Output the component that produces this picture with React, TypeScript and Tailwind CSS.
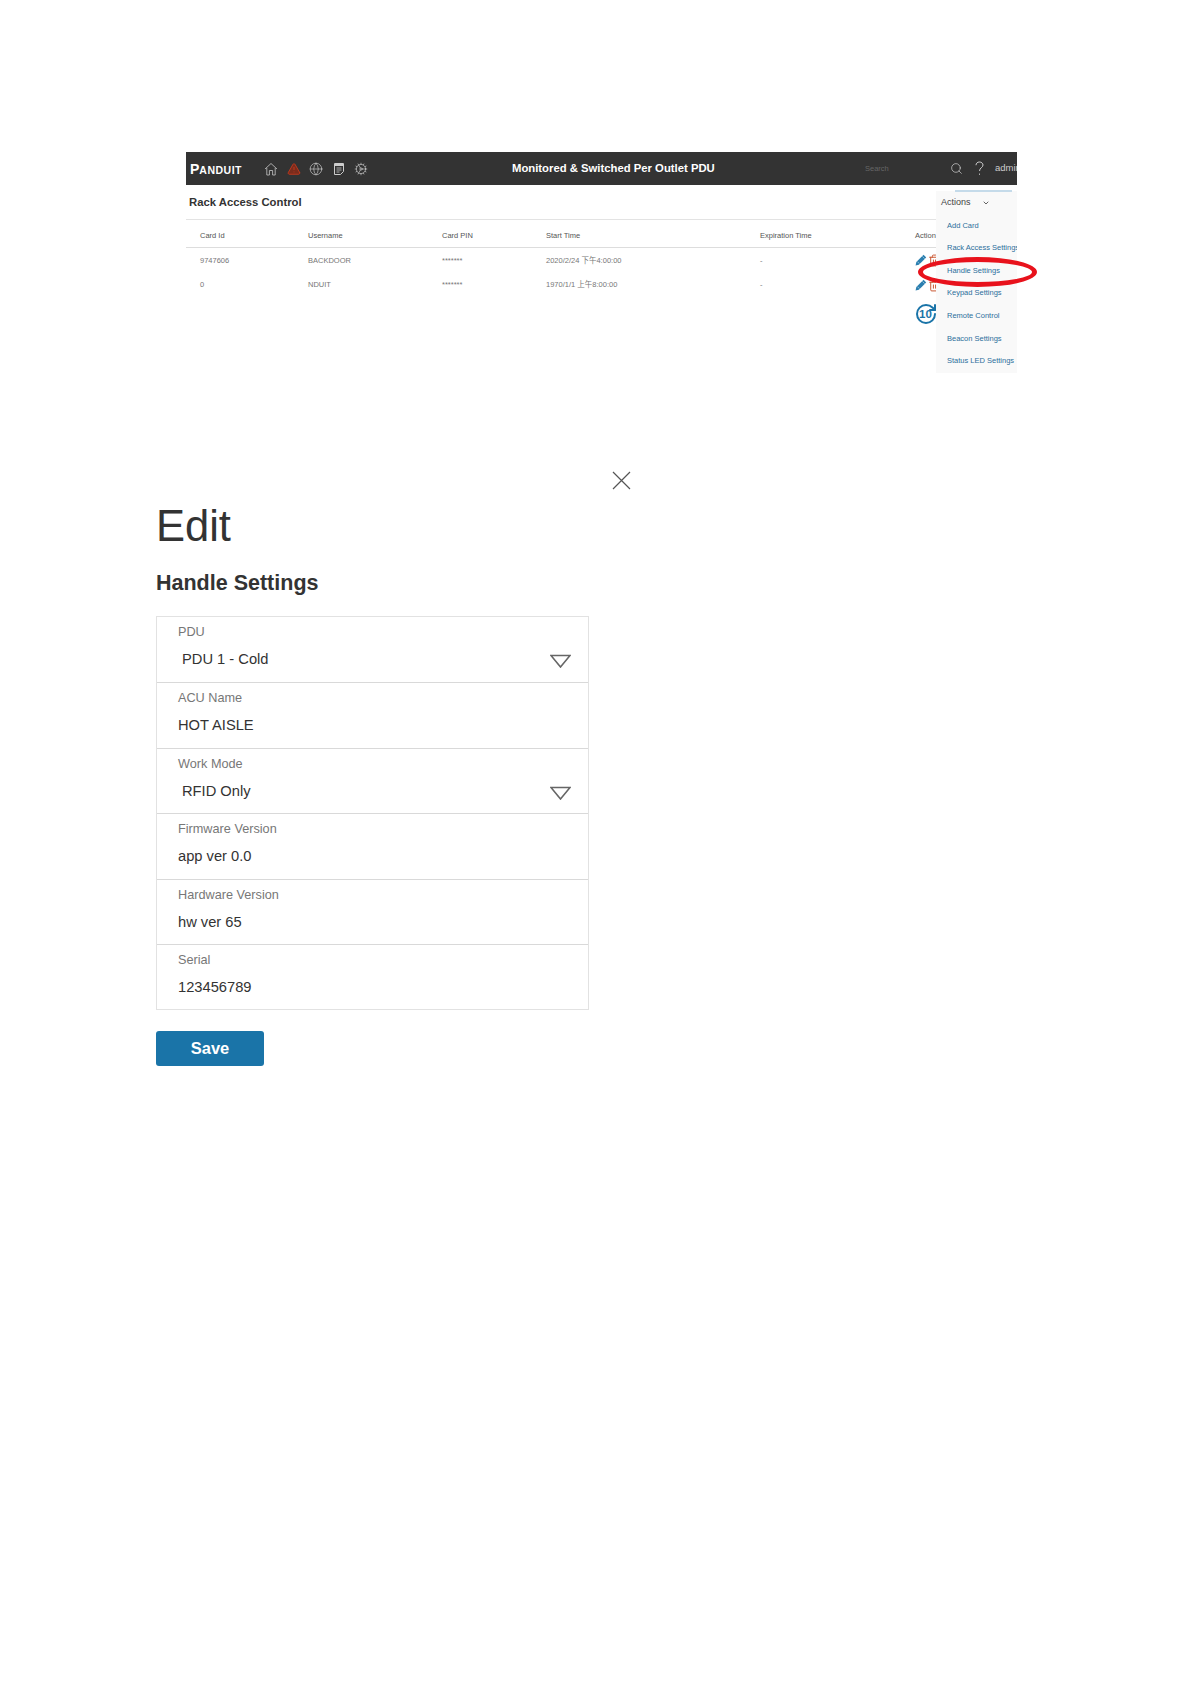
import { Search, Trash2, RotateCw, ChevronDown, Globe, Cog, TriangleAlert } from "lucide-react";

const rows = [
    { id: "9747606", user: "BACKDOOR", start: "2020/2/24 下午4:00:00" },
    { id: "0", user: "NDUIT", start: "1970/1/1 上午8:00:00" },
];

const menuItems = ["Add Card", "Rack Access Settings", "Handle Settings", "Keypad Settings", "Remote Control", "Beacon Settings", "Status LED Settings"];

const fields = [
    { label: "PDU", value: "PDU 1 - Cold", select: true },
    { label: "ACU Name", value: "HOT AISLE" },
    { label: "Work Mode", value: "RFID Only", select: true },
    { label: "Firmware Version", value: "app ver 0.0" },
    { label: "Hardware Version", value: "hw ver 65" },
    { label: "Serial", value: "123456789" },
];

const HomeIcon = () => (
    <svg width="14" height="14" viewBox="0 0 14 14" fill="none" stroke="#c8c8c8" strokeWidth="0.8">
        <path d="M1 7 7 1.5 13 7M2.8 6v7h2.6V8.5h3.2V13h2.6V6" />
    </svg>
);

const ReportIcon = () => (
    <svg width="14" height="14" viewBox="0 0 14 14" fill="none" stroke="#ccc" strokeWidth="1">
        <path d="M2.5 1.5h9v8l-3 3h-6z" />
        <path d="M2.5 3h9" strokeWidth="2" />
        <path d="M4.5 6h5M4.5 8h5M4.5 10h3" strokeWidth="0.8" />
    </svg>
);

const HelpIcon = () => (
    <svg width="9" height="15" viewBox="0 0 9 15" fill="none" stroke="#ddd" strokeWidth="0.9">
        <path d="M1 4.2C1 2.2 2.6 1 4.4 1 6.4 1 8 2.3 8 4c0 2.6-3.5 2.8-3.5 6" />
        <path d="M4.5 12.6v1.2" />
    </svg>
);

const PencilIcon = () => (
    <svg width="12" height="12" viewBox="0 0 12 12">
        <path d="M8.6.8 11.2 3.4 3.9 10.7.6 11.4 1.3 8.1z" fill="#2b7fb0" />
        <path d="M2.4 7.6 4.4 9.6M7.4 2.4l2.2 2.2" stroke="#cfe3ef" strokeWidth="0.6" />
    </svg>
);

const App = () => {
    return (
        <div className="min-h-[1685px] bg-white pt-[152px] font-['Liberation_Sans','Noto_Sans_CJK_SC',sans-serif] text-[#333]">
            {/* pasted screenshot of the rack access page */}
            <div className="relative ml-[186px] h-[221px] w-[831px]">
                <div className="flex h-[33px] items-center overflow-hidden bg-[#333] text-white">
                    <span className="ml-[4px] flex w-[60px] shrink-0 items-baseline font-bold">
                        <span className="text-[14px] leading-none">P</span>
                        <span className="text-[10.5px] leading-none tracking-[0.5px]">ANDUIT</span>
                    </span>
                    <div className="ml-[14px] flex w-[106px] shrink-0 items-center gap-[8.5px]">
                        <HomeIcon />
                        <TriangleAlert className="h-[14px] w-[14px] fill-[#7a2c1c] text-[#c93a1e]" strokeWidth={1.5} />
                        <Globe className="h-[14px] w-[14px] text-[#ddd]" strokeWidth={1} />
                        <ReportIcon />
                        <Cog className="h-[14px] w-[14px] text-[#ddd]" strokeWidth={1} />
                    </div>
                    <span className="ml-[142px] w-[353px] shrink-0 text-[11.3px] font-bold whitespace-nowrap">Monitored & Switched Per Outlet PDU</span>
                    <span className="w-[85px] shrink-0 text-[7.5px] text-[#666]">Search</span>
                    <Search className="h-[13px] w-[13px] shrink-0 text-[#ddd]" strokeWidth={1.2} />
                    <span className="ml-[12px] shrink-0"><HelpIcon /></span>
                    <span className="ml-[11px] shrink-0 text-[9.5px] text-[#ccc]">admin</span>
                </div>
                <h2 className="ml-[3px] flex h-[34px] items-center text-[11.3px] font-bold">Rack Access Control</h2>
                <table className="w-full table-fixed border-t border-[#e3e3e3] text-[7.5px] text-[#777]">
                    <thead>
                        <tr className="h-[28px] border-b border-[#ddd] text-[#555]">
                            <th className="w-[122px] pt-[4px] pl-[14px] text-left font-normal">Card Id</th>
                            <th className="w-[134px] pt-[4px] text-left font-normal">Username</th>
                            <th className="w-[104px] pt-[4px] text-left font-normal">Card PIN</th>
                            <th className="w-[214px] pt-[4px] text-left font-normal">Start Time</th>
                            <th className="w-[155px] pt-[4px] text-left font-normal">Expiration Time</th>
                            <th className="pt-[4px] text-left font-normal">Action</th>
                        </tr>
                    </thead>
                    <tbody>
                        {rows.map((row) => (
                            <tr key={row.id} className="h-[25px]">
                                <td className="pl-[14px]">{row.id}</td>
                                <td>{row.user}</td>
                                <td>*******</td>
                                <td>{row.start}</td>
                                <td>-</td>
                                <td>
                                    <div className="flex items-center gap-[1px]">
                                        <PencilIcon />
                                        <Trash2 className="h-[13px] w-[13px] text-[#c9532e]" strokeWidth={1.8} />
                                    </div>
                                </td>
                            </tr>
                        ))}
                    </tbody>
                </table>
                <div className="relative mt-[4px] ml-[728px] h-[24px] w-[24px]">
                    <RotateCw className="h-[24px] w-[24px] text-[#1a74a8]" strokeWidth={2} />
                    <span className="absolute top-[5px] left-[5px] text-[11.5px] leading-[14px] font-bold text-[#1a74a8]">10</span>
                </div>

                {/* open actions menu */}
                <div className="absolute top-[39px] right-0 h-[182px] w-[81px] overflow-hidden bg-[#f9f9f9] pt-[4px] pl-[5px] text-[7.5px] whitespace-nowrap text-[#2c6f9c]">
                    <div className="flex h-[16px] items-center gap-[11px] text-[9px] text-[#444]">
                        Actions
                        <ChevronDown className="h-[8px] w-[8px]" strokeWidth={2.5} />
                    </div>
                    <div className="mt-[3px] pl-[6px]">
                        {menuItems.map((item) => (
                            <div key={item} className="flex h-[22.6px] items-center">{item}</div>
                        ))}
                    </div>
                </div>
                <div className="absolute top-[38px] right-[5px] h-[2px] w-[57px] bg-[#c5dbea]" />
                <div className="absolute top-[105px] left-[732px] h-[30px] w-[119px] rounded-[50%] border-[5px] border-[#e8121c]" />
            </div>

            <div className="mt-[98px] ml-[156px] w-[475px]">
                <div className="flex justify-end">
                    <svg width="19" height="19" viewBox="0 0 19 19" stroke="#555" strokeWidth="1.2">
                        <path d="M1 1 18 18M18 1 1 18" />
                    </svg>
                </div>
                <h1 className="mt-[11px] text-[43.5px] leading-[50px] text-[#333]">Edit</h1>
                <h3 className="mt-[20px] text-[21.5px] leading-[25px] font-bold">Handle Settings</h3>
                <div className="mt-[20px] w-[433px] border border-[#e2e2e2]">
                    {fields.map((field, i) => (
                        <div key={field.label} className={`relative h-[65.4px] pt-[7px] pl-[21px] ${i > 0 ? "border-t border-[#d9d9d9]" : ""}`}>
                            <div className="text-[12.7px] leading-[16px] text-[#777]">{field.label}</div>
                            <div className={`mt-[10px] text-[14.7px] leading-[18px] text-[#333] ${field.select ? "pl-[4px]" : ""}`}>{field.value}</div>
                            {field.select && (
                                <svg className="absolute top-[37px] right-[17px]" width="21" height="14" viewBox="0 0 21 14" fill="none" stroke="#666" strokeWidth="1.6">
                                    <path d="M1 1.5h19L10.5 13z" />
                                </svg>
                            )}
                        </div>
                    ))}
                </div>
                <button className="mt-[21px] h-[35px] w-[108px] rounded-[3px] bg-[#1a74a8] text-[16.5px] font-bold text-white">Save</button>
            </div>
        </div>
    );
};

export default App;
